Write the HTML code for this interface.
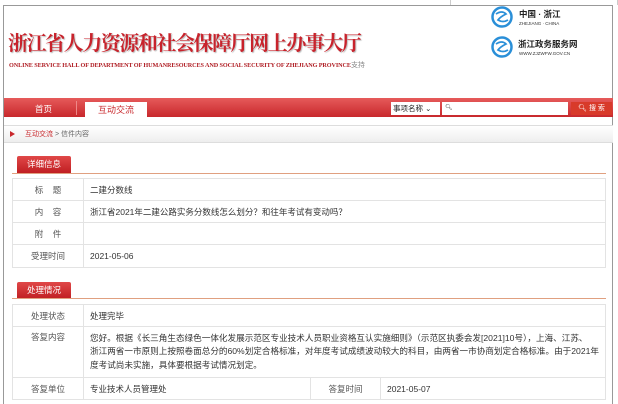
<!DOCTYPE html>
<html><head><meta charset="utf-8"><style>
*{margin:0;padding:0;box-sizing:border-box}
html,body{width:618px;height:404px;overflow:hidden}
body{background:#fff;font-family:"Liberation Sans","Noto Sans CJK SC",sans-serif;font-size:9px;color:#333;position:relative}
.abs{position:absolute}
.frame{left:3px;top:5px;width:610px;height:399px;border:1px solid #999;border-bottom:none}
.title{left:8px;top:30px;font-family:"Noto Serif CJK SC",serif;font-weight:bold;font-size:20px;color:#c8232c;letter-spacing:-1.45px;white-space:nowrap;text-shadow:1px 1px 1px #bbb;line-height:24px}
.en{left:9px;top:60px;font-family:"Liberation Serif",serif;font-size:6.2px;color:#b01e24;font-weight:bold;white-space:nowrap;letter-spacing:-0.1px}
.nav{left:4px;top:98px;width:609px;height:19px;background:linear-gradient(#e65a5a,#c8282c)}
.tab{left:85px;top:102px;width:62px;height:15px;background:#fff;color:#c8282c;text-align:center;line-height:17px;font-size:9px}
.bc{left:4px;top:125px;width:609px;height:18px;background:linear-gradient(#fff,#eee);border-top:1px solid #ddd;border-bottom:1px solid #ddd}
.sh{background:linear-gradient(#e04848,#c01e22);color:#fff;width:54px;height:17px;line-height:17px;text-align:center;font-size:8.5px;border-radius:2px 2px 0 0}
.ln{height:1px;background:#e0a080;left:12px;width:594px}
table{position:absolute;left:12px;width:594px;border-collapse:collapse}
td{border:1px solid #e3e3e3;padding:0 6px;font-size:8.5px;color:#333}
td.l{width:71px;text-align:center;color:#555}
</style></head><body>
<div class="abs" style="left:450px;top:0;width:168px;height:5px;border-left:1px solid #ccc;border-right:1px solid #ccc"></div>
<div class="abs frame"></div>
<div class="abs title">浙江省人力资源和社会保障厅网上办事大厅</div>
<div class="abs en">ONLINE SERVICE HALL OF DEPARTMENT OF HUMANRESOURCES AND SOCIAL SECURITY OF ZHEJIANG PROVINCE<span style="color:#888;font-weight:normal;font-family:'Liberation Sans','Noto Sans CJK SC',sans-serif;font-size:7px">支持</span></div>
<svg class="abs" style="left:491px;top:6px" width="22" height="22"><circle cx="11" cy="11" r="9.5" fill="none" stroke="#2a8fd8" stroke-width="2.5"/><path d="M5 8 Q11 4 15 8 Q9 11 7 14 Q12 17 17 14" fill="none" stroke="#2a8fd8" stroke-width="1.8"/></svg>
<div class="abs" style="left:519px;top:8px;font-size:8.5px;font-weight:bold;color:#222">中国 · 浙江</div>
<div class="abs" style="left:519px;top:21px;font-size:4.5px;color:#333">ZHEJIANG · CHINA</div>
<svg class="abs" style="left:491px;top:36px" width="22" height="22"><circle cx="11" cy="11" r="9.5" fill="none" stroke="#2a8fd8" stroke-width="2.5"/><path d="M5 8 Q11 4 15 8 Q9 11 7 14 Q12 17 17 14" fill="none" stroke="#2a8fd8" stroke-width="1.8"/></svg>
<div class="abs" style="left:518px;top:38px;font-size:8.5px;font-weight:bold;color:#222">浙江政务服务网</div>
<div class="abs" style="left:519px;top:51px;font-size:4.5px;color:#333">WWW.ZJZWFW.GOV.CN</div>
<div class="abs nav"></div>
<div class="abs" style="left:35px;top:103px;color:#fff;font-size:8.5px">首页</div>
<div class="abs" style="left:76px;top:101px;width:1px;height:14px;background:#e88"></div>
<div class="abs tab">互动交流</div>
<div class="abs" style="left:391px;top:102px;width:49px;height:13px;background:#fff;font-size:7.5px;line-height:13px;padding-left:2px;color:#222">事项名称 ⌄</div>
<div class="abs" style="left:442px;top:102px;width:126px;height:13px;background:#fff;font-size:6px;line-height:13px;padding-left:3px;color:#555">🔍︎</div>
<div class="abs" style="left:571px;top:102px;width:41px;height:13px;background:#d83a2a;color:#fff;font-size:7px;line-height:13px;text-align:center">🔍︎ 搜 索</div>
<div class="abs bc"></div>
<div class="abs" style="left:10px;top:131px;width:0;height:0;border-left:5px solid #c8282c;border-top:3px solid transparent;border-bottom:3px solid transparent"></div>
<div class="abs" style="left:25px;top:129px;font-size:7px;color:#c8282c">互动交流 <span style="color:#666">&gt; 信件内容</span></div>
<div class="abs sh" style="left:17px;top:156px">详细信息</div>
<div class="abs ln" style="top:173px"></div>
<table style="top:178px">
<tr style="height:22px"><td class="l">标&nbsp;&nbsp;&nbsp;&nbsp;题</td><td>二建分数线</td></tr>
<tr style="height:22px"><td class="l">内&nbsp;&nbsp;&nbsp;&nbsp;容</td><td>浙江省2021年二建公路实务分数线怎么划分？和往年考试有变动吗？</td></tr>
<tr style="height:22px"><td class="l">附&nbsp;&nbsp;&nbsp;&nbsp;件</td><td></td></tr>
<tr style="height:23px"><td class="l">受理时间</td><td>2021-05-06</td></tr>
</table>
<div class="abs sh" style="left:17px;top:282px">处理情况</div>
<div class="abs ln" style="top:298px"></div>
<table style="top:304px">
<tr style="height:22px"><td class="l">处理状态</td><td colspan="3">处理完毕</td></tr>
<tr style="height:51px"><td class="l" style="vertical-align:top;padding-top:4px">答复内容</td><td colspan="3" style="line-height:13.5px;padding-top:4px;padding-bottom:4px;padding-right:2px;font-size:8.6px;white-space:nowrap">您好。根据《长三角生态绿色一体化发展示范区专业技术人员职业资格互认实施细则》（示范区执委会发[2021]10号），上海、江苏、<br>浙江两省一市原则上按照卷面总分的60%划定合格标准，对年度考试成绩波动较大的科目，由两省一市协商划定合格标准。由于2021年<br>度考试尚未实施，具体要根据考试情况划定。</td></tr>
<tr style="height:22px"><td class="l">答复单位</td><td style="width:227px">专业技术人员管理处</td><td style="width:70px;text-align:center;color:#555">答复时间</td><td>2021-05-07</td></tr>
</table>
</body></html>
